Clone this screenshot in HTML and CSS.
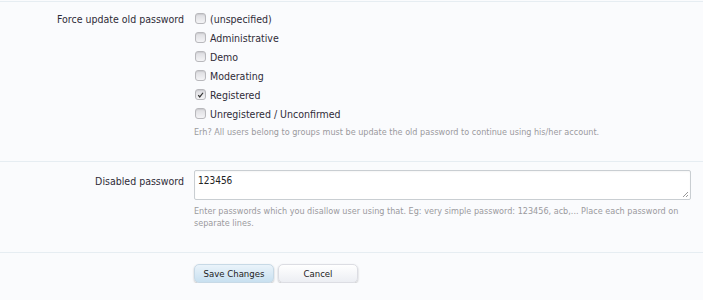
FILE: index.html
```html
<!DOCTYPE html>
<html>
<head>
<meta charset="utf-8">
<link rel="stylesheet" href="styles.css">
</head>
<body>
<div class="page">
  <div class="unit first">
    <div class="label">Force update old password</div>
    <div class="ctrl">
      <ul class="checks">
        <li><span class="cb"></span>(unspecified)</li>
        <li><span class="cb"></span>Administrative</li>
        <li><span class="cb"></span>Demo</li>
        <li><span class="cb"></span>Moderating</li>
        <li><span class="cb checked"><svg viewBox="0 0 12 12" width="12" height="12"><path d="M3 6.2 L5 8.6 L9.4 3" fill="none" stroke="#333" stroke-width="1.6"/></svg></span>Registered</li>
        <li><span class="cb"></span>Unregistered / Unconfirmed</li>
      </ul>
      <p class="hint">Erh? All users belong to groups must be update the old password to continue using his/her account.</p>
    </div>
  </div>
  <div class="unit second">
    <div class="label">Disabled password</div>
    <div class="ctrl">
      <div class="textarea">123456<span class="grip"><svg viewBox="0 0 8 8" width="8" height="8"><path d="M7 2 L2 7 M7 5 L5 7" stroke="#999" stroke-width="1"/></svg></span></div>
      <p class="hint narrow">Enter passwords which you disallow user using that. Eg: very simple password: 123456, acb,... Place each password on separate lines.</p>
    </div>
  </div>
  <div class="unit submit">
    <div class="label"></div>
    <div class="ctrl buttons">
      <span class="btn primary">Save Changes</span>
      <span class="btn">Cancel</span>
    </div>
  </div>
</div>
</body>
</html>
```
FILE: styles.css
```css
html, body {
  margin: 0;
  padding: 0;
  background: #fafbfd;
}
body {
  font-family: "DejaVu Sans Condensed", "DejaVu Sans", sans-serif;
  font-size: 10.5px;
  color: #2f2b38;
}
.page {
  border-top: 1px solid #e6edf2;
  margin-top: 1px;
}
.unit {
  display: grid;
  grid-template-columns: 184px 1fr;
  column-gap: 10px;
}
.unit.first {
  padding-top: 8px;
  padding-bottom: 23px;
  border-bottom: 1px solid #e6edf2;
}
.unit.second {
  padding-top: 8px;
  padding-bottom: 23px;
  border-bottom: 1px solid #e6edf2;
}
.unit.submit {
  padding-top: 11px;
}
.label {
  text-align: right;
  line-height: 18px;
}
.second .label {
  padding-top: 2px;
}
.checks {
  list-style: none;
  margin: 0;
  padding: 0;
}
.checks li {
  display: flex;
  align-items: center;
  height: 19px;
  line-height: 19px;
}
.cb {
  box-sizing: border-box;
  width: 11px;
  height: 11px;
  margin-left: 1px;
  margin-right: 4px;
  border: 1px solid #b8b8bc;
  border-radius: 3px;
  background: linear-gradient(#dcdce0, #f4f4f6);
  box-shadow: inset 0 1px 1px rgba(0,0,0,0.08);
  position: relative;
  top: -1px;
  display: inline-flex;
  align-items: center;
  justify-content: center;
}
.cb svg {
  width: 10px;
  height: 10px;
}
.hint {
  margin: 2px 0 0 0;
  font-size: 9px;
  line-height: 12px;
  color: #9a9a9e;
}
.hint.narrow {
  max-width: 490px;
  margin-top: 5px;
}
.textarea {
  box-sizing: border-box;
  height: 30px;
  width: 497px;
  border: 1px solid #c9ced2;
  border-radius: 2px;
  background: #fff;
  padding: 3px 3px;
  font-size: 10px;
  line-height: 14px;
  color: #222;
  position: relative;
  box-shadow: inset 0 1px 2px rgba(0,0,0,0.04);
}
.grip {
  position: absolute;
  right: 1px;
  bottom: 1px;
  width: 8px;
  height: 8px;
  display: flex;
}
.buttons {
  display: flex;
  gap: 4px;
}
.btn {
  box-sizing: border-box;
  width: 80px;
  height: 19px;
  line-height: 18px;
  text-align: center;
  font-size: 9.5px;
  color: #222;
  border-radius: 5px;
  border: 1px solid #dcdde3;
  background: linear-gradient(#ffffff, #eceef3);
  box-shadow: 0 1px 2px rgba(0,0,0,0.25);
}
.btn.primary {
  background: linear-gradient(#eaf3fa, #c8e0f0);
  border-color: #c7d9e6;
}
```
